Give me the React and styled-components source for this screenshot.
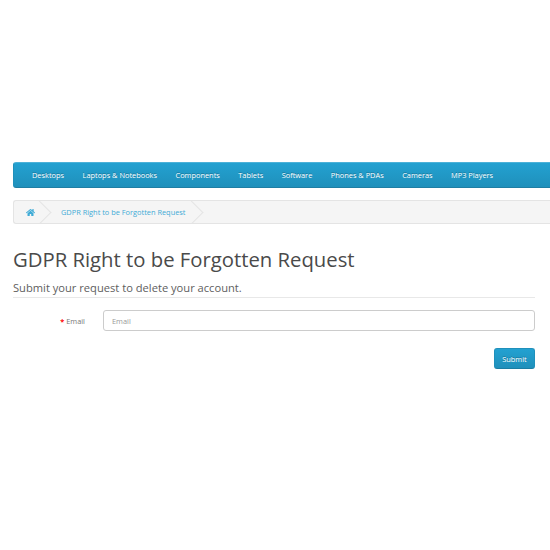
import React from 'react';
import styled, { createGlobalStyle } from 'styled-components';
import { FaHome } from 'react-icons/fa';

const GlobalStyle = createGlobalStyle`
  html, body {
    background: #fff;
    height: 100%;
    margin: 0;
    overflow: hidden;
  }
  body {
    color: #666;
    font-family: "Open Sans", sans-serif;
    font-size: 9px;
  }
`;

const Page = styled.div`
  padding: 162px 15px 0 13px;
`;

const Menu = styled.nav`
  align-items: center;
  background: linear-gradient(to bottom, #23a1d1, #1f90bb);
  border-bottom: 1px solid #1f7ea3;
  border-left: 1px solid #1f90bb;
  border-radius: 3px 0 0 3px;
  border-top: 1px solid #4cb1d8;
  box-sizing: border-box;
  display: flex;
  gap: 18.5px;
  height: 26px;
  margin-right: -15px;
  padding-left: 18px;
`;

const MenuItem = styled.a`
  color: #fff;
  font-size: 7.4px;
  text-shadow: 0 -1px 0 rgba(0, 0, 0, 0.25);
  white-space: nowrap;
`;

const Breadcrumb = styled.ul`
  background: #f5f5f5;
  border: 1px solid #e4e4e4;
  border-right: 0;
  border-radius: 3px 0 0 3px;
  box-sizing: border-box;
  display: flex;
  height: 24px;
  list-style: none;
  margin: 12px -15px 0 0;
  overflow: hidden;
  padding: 0;
`;

const Crumb = styled.li`
  align-items: center;
  color: #3fabd6;
  display: flex;
  font-size: 7.4px;
  padding: 0 ${(p) => p.$right}px 0 ${(p) => p.$left}px;
  position: relative;
  white-space: nowrap;

  &::after {
    border-right: 1px solid #e4e4e4;
    border-top: 1px solid #e4e4e4;
    content: '';
    height: 16px;
    position: absolute;
    right: 0;
    top: 3px;
    transform: rotate(45deg);
    width: 16px;
  }
`;

const Title = styled.h1`
  color: #4a4a4a;
  font-size: 20.3px;
  font-weight: 400;
  line-height: 30px;
  margin: 20px 0 0;
`;

const Lead = styled.p`
  border-bottom: 1px solid #e8e8e8;
  color: #606060;
  font-size: 11.15px;
  line-height: 18px;
  margin: 5px 0 0;
`;

const Row = styled.div`
  align-items: center;
  display: flex;
  gap: 18px;
  margin-top: 12px;
`;

const Label = styled.label`
  color: #777;
  flex: 0 0 72px;
  font-size: 7.4px;
  text-align: right;
`;

const Star = styled.span`
  color: #f00;
  font-weight: 700;
`;

const Input = styled.input`
  background: #fff;
  border: 1px solid #ccc;
  border-radius: 3px;
  box-sizing: border-box;
  color: #555;
  flex: 1;
  font-family: inherit;
  font-size: 7.4px;
  height: 21px;
  min-width: 0;
  padding: 0 8px;

  &::placeholder {
    color: #999;
    opacity: 1;
  }
`;

const Actions = styled.div`
  display: flex;
  justify-content: flex-end;
  margin-top: 17px;
`;

const Submit = styled.button`
  background: linear-gradient(to bottom, #23a1d1, #1f90bb);
  border: 1px solid #1f90bb;
  border-bottom-color: #1a7da3;
  border-radius: 3px;
  color: #fff;
  font-family: inherit;
  font-size: 7.4px;
  height: 21px;
  padding: 0;
  text-shadow: 0 -1px 0 rgba(0, 0, 0, 0.25);
  width: 41px;
`;

const menu = [
  'Desktops',
  'Laptops & Notebooks',
  'Components',
  'Tablets',
  'Software',
  'Phones & PDAs',
  'Cameras',
  'MP3 Players',
];

const App = () => (
  <Page>
    <GlobalStyle />
    <Menu>
      {menu.map((item) => (
        <MenuItem key={item}>{item}</MenuItem>
      ))}
    </Menu>
    <Breadcrumb>
      <Crumb $left={12} $right={13}>
        <FaHome size={9} />
      </Crumb>
      <Crumb $left={13} $right={15}>GDPR Right to be Forgotten Request</Crumb>
    </Breadcrumb>
    <Title>GDPR Right to be Forgotten Request</Title>
    <Lead>Submit your request to delete your account.</Lead>
    <Row>
      <Label>
        <Star>*</Star> Email
      </Label>
      <Input placeholder="Email" />
    </Row>
    <Actions>
      <Submit>Submit</Submit>
    </Actions>
  </Page>
);

export default App;
